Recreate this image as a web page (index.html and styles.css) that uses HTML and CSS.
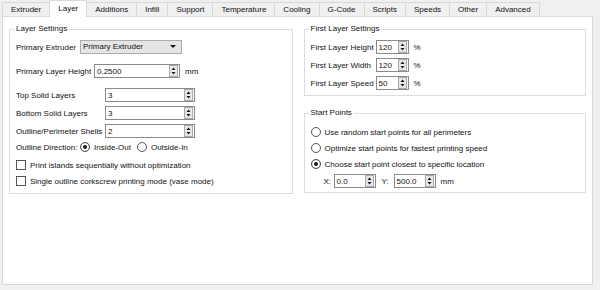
FILE: index.html
```html
<!DOCTYPE html>
<html lang="en">
<head>
    <meta charset="UTF-8">
    <title>Layer Settings</title>
    <link rel="stylesheet" href="styles.css">
</head>
<body>

    <div class="tabs">
        <span class="tab">Extruder</span>
        <span class="tab active">Layer</span>
        <span class="tab">Additions</span>
        <span class="tab">Infill</span>
        <span class="tab">Support</span>
        <span class="tab">Temperature</span>
        <span class="tab">Cooling</span>
        <span class="tab">G-Code</span>
        <span class="tab">Scripts</span>
        <span class="tab">Speeds</span>
        <span class="tab">Other</span>
        <span class="tab">Advanced</span>
    </div>

    <div class="panel">
        <div class="col col-left">
            <fieldset class="group group-layer">
                <legend>Layer Settings</legend>

                <div class="row row-first">
                    <span class="lbl lbl-extruder">Primary Extruder</span>
                    <span class="combo">Primary Extruder<i class="arrow"></i></span>
                </div>

                <div class="row row-gap">
                    <span class="lbl lbl-height">Primary Layer Height</span>
                    <span class="spin spin-height"><span class="val">0.2500</span><svg class="btns" viewBox="0 0 9 12"><rect x="0.5" y="0.5" width="8" height="11" fill="#e8e8e8" stroke="#a8a8a8"/><path d="M2.5 5 L4.5 2.5 L6.5 5 Z M2.5 7 L4.5 9.5 L6.5 7 Z" fill="#111"/></svg></span>
                    <span class="unit">mm</span>
                </div>

                <div class="row row-gap">
                    <span class="lbl lbl-solid">Top Solid Layers</span>
                    <span class="spin spin-solid"><span class="val">3</span><svg class="btns" viewBox="0 0 9 12"><rect x="0.5" y="0.5" width="8" height="11" fill="#e8e8e8" stroke="#a8a8a8"/><path d="M2.5 5 L4.5 2.5 L6.5 5 Z M2.5 7 L4.5 9.5 L6.5 7 Z" fill="#111"/></svg></span>
                </div>

                <div class="row row-tight">
                    <span class="lbl lbl-solid">Bottom Solid Layers</span>
                    <span class="spin spin-solid"><span class="val">3</span><svg class="btns" viewBox="0 0 9 12"><rect x="0.5" y="0.5" width="8" height="11" fill="#e8e8e8" stroke="#a8a8a8"/><path d="M2.5 5 L4.5 2.5 L6.5 5 Z M2.5 7 L4.5 9.5 L6.5 7 Z" fill="#111"/></svg></span>
                </div>

                <div class="row row-tight">
                    <span class="lbl lbl-solid">Outline/Perimeter Shells</span>
                    <span class="spin spin-solid"><span class="val">2</span><svg class="btns" viewBox="0 0 9 12"><rect x="0.5" y="0.5" width="8" height="11" fill="#e8e8e8" stroke="#a8a8a8"/><path d="M2.5 5 L4.5 2.5 L6.5 5 Z M2.5 7 L4.5 9.5 L6.5 7 Z" fill="#111"/></svg></span>
                </div>

                <div class="row row-close">
                    <span class="lbl lbl-extruder">Outline Direction:</span>
                    <span class="radio checked"></span><span class="opt opt-inside">Inside-Out</span>
                    <span class="radio"></span><span class="opt">Outside-In</span>
                </div>

                <div class="row row-tight">
                    <span class="check"></span><span class="opt">Print islands sequentially without optimization</span>
                </div>

                <div class="row row-close">
                    <span class="check"></span><span class="opt">Single outline corkscrew printing mode (vase mode)</span>
                </div>
            </fieldset>
        </div>

        <div class="col col-right">
            <fieldset class="group group-first">
                <legend>First Layer Settings</legend>

                <div class="row row-first">
                    <span class="lbl lbl-first">First Layer Height</span>
                    <span class="spin spin-pct"><span class="val">120</span><svg class="btns" viewBox="0 0 9 12"><rect x="0.5" y="0.5" width="8" height="11" fill="#e8e8e8" stroke="#a8a8a8"/><path d="M2.5 5 L4.5 2.5 L6.5 5 Z M2.5 7 L4.5 9.5 L6.5 7 Z" fill="#111"/></svg></span>
                    <span class="unit">%</span>
                </div>

                <div class="row row-tight">
                    <span class="lbl lbl-first">First Layer Width</span>
                    <span class="spin spin-pct"><span class="val">120</span><svg class="btns" viewBox="0 0 9 12"><rect x="0.5" y="0.5" width="8" height="11" fill="#e8e8e8" stroke="#a8a8a8"/><path d="M2.5 5 L4.5 2.5 L6.5 5 Z M2.5 7 L4.5 9.5 L6.5 7 Z" fill="#111"/></svg></span>
                    <span class="unit">%</span>
                </div>

                <div class="row row-tight">
                    <span class="lbl lbl-first">First Layer Speed</span>
                    <span class="spin spin-pct"><span class="val">50</span><svg class="btns" viewBox="0 0 9 12"><rect x="0.5" y="0.5" width="8" height="11" fill="#e8e8e8" stroke="#a8a8a8"/><path d="M2.5 5 L4.5 2.5 L6.5 5 Z M2.5 7 L4.5 9.5 L6.5 7 Z" fill="#111"/></svg></span>
                    <span class="unit">%</span>
                </div>
            </fieldset>

            <fieldset class="group group-start">
                <legend>Start Points</legend>

                <div class="row row-start">
                    <span class="radio"></span><span class="opt">Use random start points for all perimeters</span>
                </div>
                <div class="row row-close">
                    <span class="radio"></span><span class="opt">Optimize start points for fastest printing speed</span>
                </div>
                <div class="row row-close">
                    <span class="radio checked"></span><span class="opt">Choose start point closest to specific location</span>
                </div>
                <div class="row row-xy">
                    <span class="axis">X:</span>
                    <span class="spin spin-xy"><span class="val">0.0</span><svg class="btns" viewBox="0 0 9 12"><rect x="0.5" y="0.5" width="8" height="11" fill="#e8e8e8" stroke="#a8a8a8"/><path d="M2.5 5 L4.5 2.5 L6.5 5 Z M2.5 7 L4.5 9.5 L6.5 7 Z" fill="#111"/></svg></span>
                    <span class="axis axis-y">Y:</span>
                    <span class="spin spin-xy"><span class="val">500.0</span><svg class="btns" viewBox="0 0 9 12"><rect x="0.5" y="0.5" width="8" height="11" fill="#e8e8e8" stroke="#a8a8a8"/><path d="M2.5 5 L4.5 2.5 L6.5 5 Z M2.5 7 L4.5 9.5 L6.5 7 Z" fill="#111"/></svg></span>
                    <span class="unit">mm</span>
                </div>
            </fieldset>
        </div>
    </div>

</body>
</html>
```

FILE: styles.css
```css
* { margin: 0; padding: 0; box-sizing: border-box; }
body { background: #f0f0f0; font-family: "Liberation Sans", Arial, sans-serif; font-size: 8px; color: #111; width: 600px; height: 290px; overflow: hidden; }

.tabs { display: flex; align-items: flex-end; height: 16px; padding-left: 2px; }
.tab { height: 14px; line-height: 13px; padding: 0 8px; background: #f0f0f0; border: 1px solid #d9d9d9; border-bottom: none; margin-left: -1px; }
.tab:first-child { margin-left: 0; }
.tab.active { height: 17px; line-height: 16px; background: #fff; margin-bottom: -1px; position: relative; z-index: 1; }

.panel { display: flex; gap: 11px; margin-left: 2px; width: 591px; height: 269px; background: #fff; border: 1px solid #d9d9d9; padding: 7px 6px 0 6px; }
.col-left { width: 284px; }
.col-right { width: 283px; }

.group { border: 1px solid #dcdcdc; padding: 0 6px 5px 6px; min-width: 0; }
.group legend { padding: 0 2px; margin-left: -2px; line-height: 10px; }
.group-start { margin-top: 12px; padding-bottom: 4px; }

.row { display: flex; align-items: center; height: 14px; white-space: nowrap; }
.row-first { margin-top: 6px; }
.row-gap { margin-top: 10px; }
.row-tight { margin-top: 4px; }
.row-close { margin-top: 2px; }
.row-start { margin-top: 7px; }
.row-xy { margin-top: 3px; padding-left: 13px; }

.lbl-extruder { width: 64px; }
.lbl-height { width: 78px; }
.lbl-solid { width: 89px; }
.lbl-first { width: 65px; }

.combo { position: relative; width: 102px; height: 14px; line-height: 12px; padding-left: 2px; background: #e5e5e5; border: 1px solid #adadad; }
.combo .arrow { position: absolute; right: 5px; top: 4px; width: 0; height: 0; border-left: 3px solid transparent; border-right: 3px solid transparent; border-top: 3px solid #111; }

.spin { display: flex; align-items: center; justify-content: space-between; height: 14px; background: #fff; border: 1px solid #8a8a8a; padding: 0 1px 0 2px; }
.spin .btns { width: 9px; height: 12px; display: block; }
.spin-height { width: 86px; }
.spin-solid { width: 90px; }
.spin-pct { width: 33px; }
.spin-xy { width: 42px; }

.unit { margin-left: 5px; }
.axis { width: 10px; }
.axis-y { width: 12px; margin-left: 6px; }

.radio { width: 10px; height: 10px; border: 1px solid #555; border-radius: 50%; background: #fff; margin-right: 4px; flex: none; }
.radio.checked { background: #1a1a1a; box-shadow: inset 0 0 0 2px #fff; }
.opt-inside { margin-right: 6px; }

.check { width: 10px; height: 10px; border: 1px solid #555; background: #fff; margin-right: 4px; flex: none; }
```
